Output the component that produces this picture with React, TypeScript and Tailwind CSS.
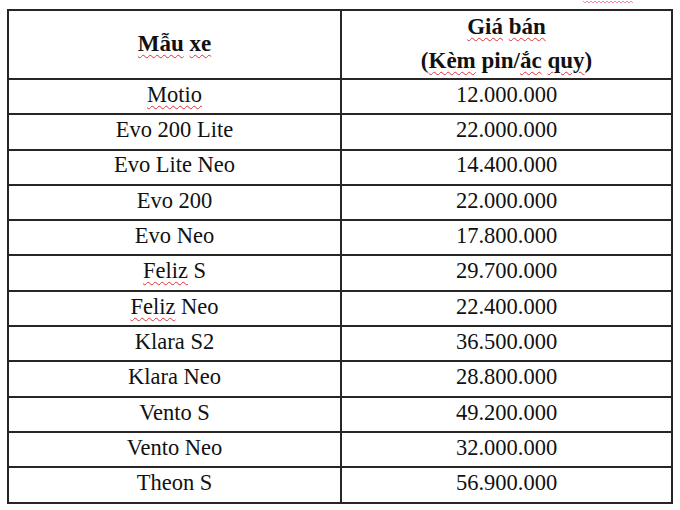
const rows: [string, string, boolean][] = [
  ['Motio', '12.000.000', true],
  ['Evo 200 Lite', '22.000.000', false],
  ['Evo Lite Neo', '14.400.000', false],
  ['Evo 200', '22.000.000', false],
  ['Evo Neo', '17.800.000', false],
  ['Feliz S', '29.700.000', true],
  ['Feliz Neo', '22.400.000', true],
  ['Klara S2', '36.500.000', false],
  ['Klara Neo', '28.800.000', false],
  ['Vento S', '49.200.000', false],
  ['Vento Neo', '32.000.000', false],
  ['Theon S', '56.900.000', false],
];

// Word's red spell-check squiggle
function Sq({ children }: { children: React.ReactNode }) {
  return (
    <span className="underline decoration-wavy decoration-[#e0303a] decoration-1 underline-offset-[3px]">
      {children}
    </span>
  );
}

function ModelName({ name, flagged }: { name: string; flagged: boolean }) {
  if (!flagged) return <>{name}</>;
  const [first, ...rest] = name.split(' ');
  return (
    <>
      <Sq>{first}</Sq>
      {rest.length > 0 ? ' ' + rest.join(' ') : ''}
    </>
  );
}

export default function App() {
  return (
    <div
      className="relative w-[680px] h-[510px] bg-white text-[#111] overflow-hidden"
      style={{ fontFamily: '"Liberation Serif", "Times New Roman", serif' }}
    >
      <svg className="absolute left-[583px] top-0" width="50" height="4" viewBox="0 0 50 4">
        <polyline
          points="0,1 2,3 4,1 6,3 8,1 10,3 12,1 14,3 16,1 18,3 20,1 22,3 24,1 26,3 28,1 30,3 32,1 34,3 36,1 38,3 40,1 42,3 44,1 46,3 48,1 50,3"
          fill="none"
          stroke="#f28aa0"
          strokeWidth="1"
        />
      </svg>

      <div className="pt-[9px] pl-[7px]">
        <table className="border-collapse w-[666px] text-[22.5px] leading-none">
          <thead>
            <tr>
              <th className="w-[333px] h-[69px] p-0 border-2 border-[#262626] font-bold text-[23px] text-center align-middle">
                <span className="relative -top-[1px]">
                  <Sq>Mẫu</Sq> <Sq>xe</Sq>
                </span>
              </th>
              <th className="h-[69px] p-0 border-2 border-[#262626] font-bold text-[23px] text-center align-middle leading-[34px]">
                <div className="-mt-[2px]">
                  <Sq>Giá</Sq> <Sq>bán</Sq>
                </div>
                <div>
                  (<Sq>Kèm</Sq> pin/<Sq>ắc</Sq> <Sq>quy</Sq>)
                </div>
              </th>
            </tr>
          </thead>
          <tbody>
            {rows.map(([name, price, flagged]) => (
              <tr key={name}>
                <td className="h-[35.3px] p-0 border-2 border-[#262626] text-center align-middle pb-[3px]">
                  <ModelName name={name} flagged={flagged} />
                </td>
                <td className="h-[35.3px] p-0 border-2 border-[#262626] text-center align-middle pb-[3px]">
                  {price}
                </td>
              </tr>
            ))}
          </tbody>
        </table>
      </div>
    </div>
  );
}
